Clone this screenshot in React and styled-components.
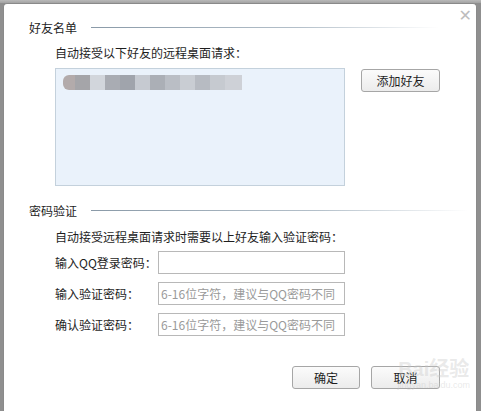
import React from 'react';
import styled, { createGlobalStyle } from 'styled-components';

const GlobalStyle = createGlobalStyle`
    html, body {
        margin: 0;
        padding: 0;
        background: #8c8c8c;
        overflow: hidden;
    }
    body {
        font-family: "Noto Sans CJK SC", "Microsoft YaHei", sans-serif;
        font-size: 12px;
        color: #1e1e1e;
    }
`;

const Page = styled.div`
    width: 481px;
    height: 411px;
    overflow: hidden;
    padding: 3px 4px 0 3px;
    box-sizing: border-box;
    background: linear-gradient(to bottom, #b9b9b9 0, #a3a3a3 3px, #8f8f8f 3px);
`;

const Dialog = styled.div`
    position: relative;
    height: 408px;
    background: #fff;
    border: 1px solid #8a8a8a;
    border-bottom: none;
    border-radius: 4px 4px 0 0;
    box-sizing: border-box;
    padding: 16px 36px 0 25px;
`;

const Close = styled.span`
    position: absolute;
    top: 4px;
    right: 4px;
    font-size: 16px;
    line-height: 16px;
    color: #bdbdbd;
    font-family: "DejaVu Sans", sans-serif;
`;

const Header = styled.div`
    display: flex;
    align-items: center;
    height: 16px;
    line-height: 16px;
    margin-top: ${p => p.$top || 0}px;
    margin-right: ${p => p.$lineEnd || 0}px;

    .rule {
        flex: 1;
        height: 1px;
        margin-left: 14px;
        margin-top: -2px;
        background: linear-gradient(to right, #8a9aa8 0%, #b4c0ca 60%, rgba(255,255,255,0) 100%);
    }
`;

const Body = styled.div`
    padding-left: 26px;
`;

const Note = styled.div`
    height: 16px;
    line-height: 16px;
    margin-top: ${p => p.$top || 0}px;
`;

const ListRow = styled.div`
    display: flex;
    align-items: flex-start;
    gap: 16px;
    margin-top: 7px;
`;

const FriendList = styled.div`
    width: 290px;
    height: 118px;
    box-sizing: border-box;
    background: #eaf2fb;
    border: 1px solid #c4d1dc;
    padding: 6px 0 0 7px;
`;

const Mosaic = styled.div`
    display: flex;
    height: 15px;
`;

const Tile = styled.span`
    display: block;
    width: ${p => p.$w || 15}px;
    height: 15px;
    background: ${p => p.$c};
    border-radius: ${p => (p.$round ? '6px 0 0 6px' : '0')};
    filter: blur(0.6px);
`;

const Button = styled.button`
    width: ${p => p.$w}px;
    height: 23px;
    padding: 0;
    font-family: inherit;
    font-size: 12px;
    color: #1e1e1e;
    background: linear-gradient(to bottom, #fbfbfb, #ececec);
    border: 1px solid #a6a6a6;
    border-radius: 3px;
    cursor: pointer;
`;

const AddButton = styled(Button)`
    margin-top: 1px;
`;

const Form = styled.div`
    display: flex;
    flex-direction: column;
    gap: 8px;
    margin-top: 6px;
`;

const Row = styled.label`
    display: flex;
    align-items: center;
`;

const Label = styled.span`
    width: 103px;
`;

const Input = styled.input`
    width: 187px;
    height: 23px;
    box-sizing: border-box;
    border: 1px solid #b8b8b8;
    padding: 0 2px;
    font-family: inherit;
    font-size: 12px;
    color: #1e1e1e;
    outline: none;

    &::placeholder {
        color: #9a9a9a;
    }
`;

const Footer = styled.div`
    display: flex;
    justify-content: flex-end;
    gap: 11px;
    margin-top: 30px;
    position: relative;
`;

const Watermark = styled.div`
    position: absolute;
    right: -30px;
    top: -8px;
    text-align: center;
    color: rgba(200, 200, 200, 0.4);
    pointer-events: none;
    font-family: "Liberation Sans", "Noto Sans CJK SC", sans-serif;

    .brand {
        font-size: 20px;
        font-weight: bold;
        line-height: 22px;
    }
    .url {
        font-size: 9px;
        line-height: 10px;
    }
`;

const tiles = [
    { c: '#b3abab', w: 12, round: true },
    { c: '#a5a5a9' },
    { c: '#d2d6dc' },
    { c: '#a9acb3' },
    { c: '#a0a4ac' },
    { c: '#c6cad1' },
    { c: '#abafb6' },
    { c: '#babec5' },
    { c: '#c9cdd3' },
    { c: '#b7bbc2' },
    { c: '#c6cad0' },
    { c: '#ced1d7', w: 17 },
];

export default function App() {
    return (
        <>
            <GlobalStyle />
            <Page>
                <Dialog>
                    <Close>✕</Close>

                    <Header $lineEnd={1}>
                        <span>好友名单</span>
                        <div className="rule" />
                    </Header>
                    <Body>
                        <Note $top={9}>自动接受以下好友的远程桌面请求：</Note>
                        <ListRow>
                            <FriendList>
                                <Mosaic>
                                    {tiles.map((t, idx) => (
                                        <Tile key={idx} $c={t.c} $w={t.w} $round={t.round} />
                                    ))}
                                </Mosaic>
                            </FriendList>
                            <AddButton $w={79}>添加好友</AddButton>
                        </ListRow>
                    </Body>

                    <Header $top={17} $lineEnd={-28}>
                        <span>密码验证</span>
                        <div className="rule" />
                    </Header>
                    <Body>
                        <Note $top={10}>自动接受远程桌面请求时需要以上好友输入验证密码：</Note>
                        <Form>
                            <Row>
                                <Label>输入QQ登录密码：</Label>
                                <Input type="password" />
                            </Row>
                            <Row>
                                <Label>输入验证密码：</Label>
                                <Input type="password" placeholder="6-16位字符，建议与QQ密码不同" />
                            </Row>
                            <Row>
                                <Label>确认验证密码：</Label>
                                <Input type="password" placeholder="6-16位字符，建议与QQ密码不同" />
                            </Row>
                        </Form>
                    </Body>

                    <Footer>
                        <Button $w={68}>确定</Button>
                        <Button $w={69}>取消</Button>
                        <Watermark>
                            <div className="brand">Bai经验</div>
                            <div className="url">jingyan.baidu.com</div>
                        </Watermark>
                    </Footer>
                </Dialog>
            </Page>
        </>
    );
}
